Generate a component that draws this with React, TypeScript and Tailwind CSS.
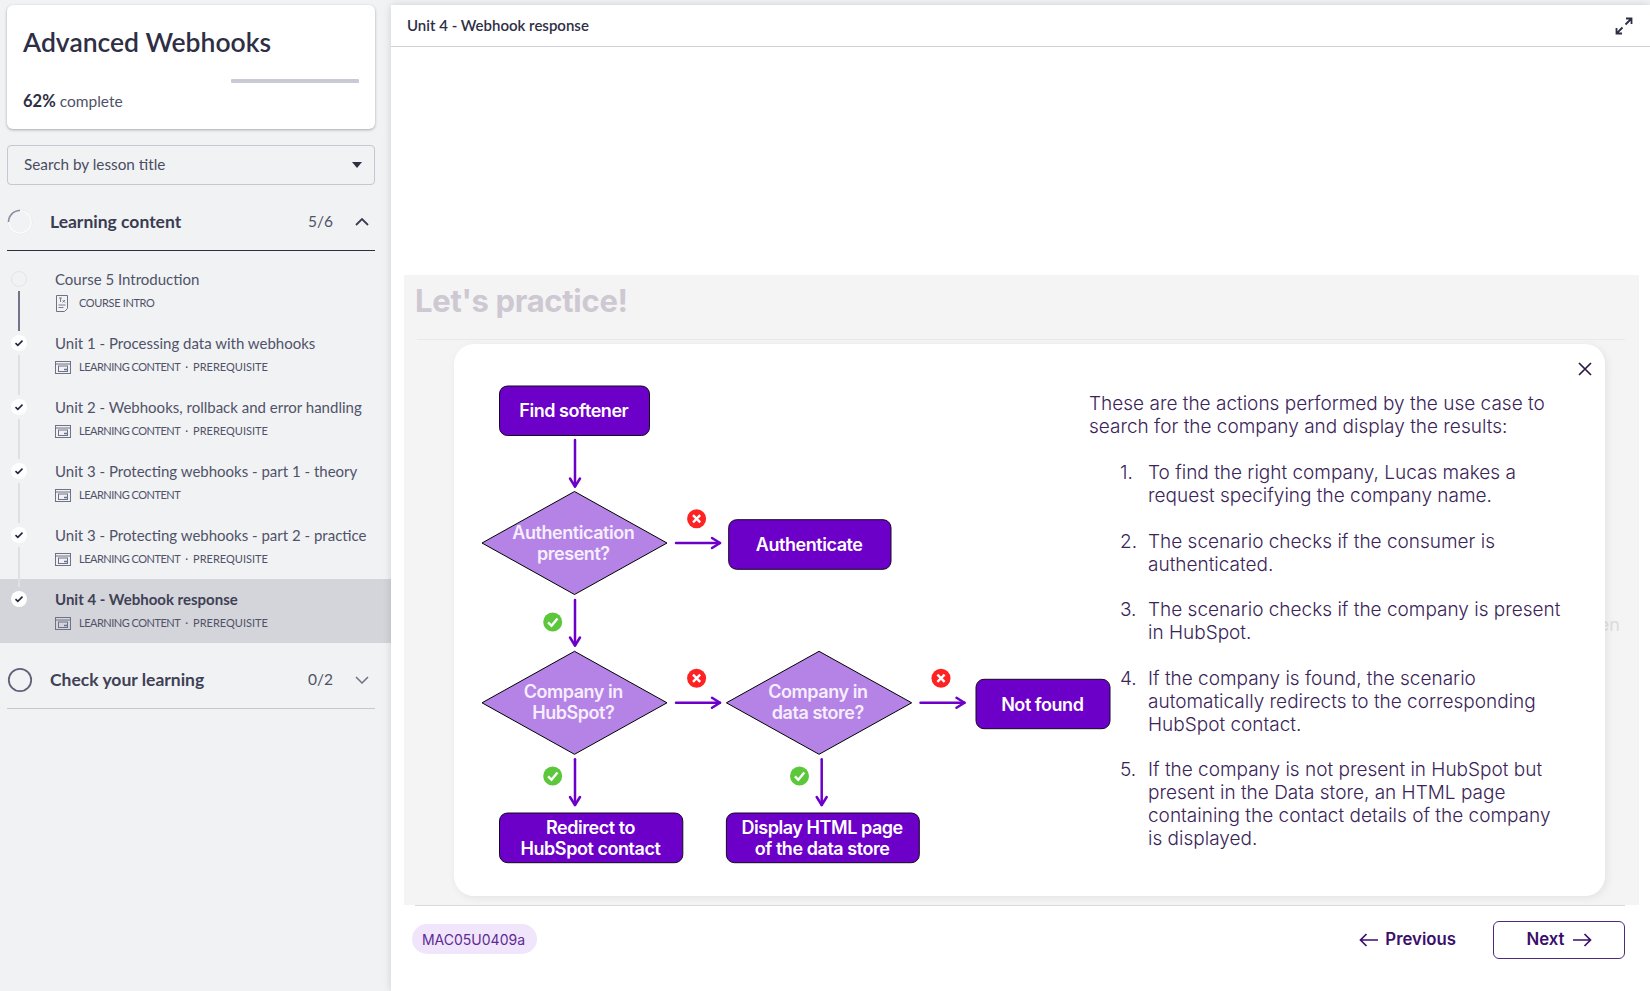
import React from "react";

const ST = "font-['Lato','Noto_Sans',sans-serif]";

const rows = [
  { title: "Course 5 Introduction", sub: ["COURSE INTRO"], intro: true, done: false, active: false },
  { title: "Unit 1 - Processing data with webhooks", sub: ["LEARNING CONTENT", "PREREQUISITE"], done: true, active: false },
  { title: "Unit 2 - Webhooks, rollback and error handling", sub: ["LEARNING CONTENT", "PREREQUISITE"], done: true, active: false },
  { title: "Unit 3 - Protecting webhooks - part 1 - theory", sub: ["LEARNING CONTENT"], done: true, active: false },
  { title: "Unit 3 - Protecting webhooks - part 2 - practice", sub: ["LEARNING CONTENT", "PREREQUISITE"], done: true, active: false },
  { title: "Unit 4 - Webhook response", sub: ["LEARNING CONTENT", "PREREQUISITE"], done: true, active: true },
];

const steps = [
  ["To find the right company, Lucas makes a", "request specifying the company name."],
  ["The scenario checks if the consumer is", "authenticated."],
  ["The scenario checks if the company is present", "in HubSpot."],
  ["If the company is found, the scenario", "automatically redirects to the corresponding", "HubSpot contact."],
  ["If the company is not present in HubSpot but", "present in the Data store, an HTML page", "containing the contact details of the company", "is displayed."],
];

function WindowIcon() {
  return (
    <svg width="16" height="13" viewBox="0 0 16 13" fill="none" stroke="#6f7186" strokeWidth="1" className="shrink-0">
      <rect x="0.5" y="0.5" width="15" height="12" />
      <path d="M0.5 3h15" />
      <rect x="3.5" y="5" width="9" height="5.5" />
      <path d="M9 8.5h3" strokeWidth="1.5" />
    </svg>
  );
}

function IntroIcon() {
  return (
    <svg width="14" height="17" viewBox="0 0 14 17" fill="none" stroke="#6f7186" strokeWidth="1" className="shrink-0">
      <path d="M1.5 0.5h11v13l-3 3h-8z" />
      <path d="M4 3h3M5.5 3v4M7.5 5l2.5 2.5M10 5l-2.5 2.5M3.5 10h7M3.5 12.5h5" strokeWidth="0.9" />
    </svg>
  );
}

function Row({ r, last }: { r: (typeof rows)[number]; last: boolean }) {
  return (
    <div className={`flex h-[64px] ${r.active ? "bg-[#d4d5da]" : ""}`}>
      <div className="w-[55px] shrink-0 flex flex-col items-center pr-[17px] pt-[12px]">
        <div
          className={`relative z-10 flex h-[16px] w-[16px] shrink-0 items-center justify-center rounded-full ${
            r.done ? "bg-white" : "border border-[#e4e5e9] bg-[#f1f2f4]"
          }`}
        >
          {r.done && (
            <svg width="10" height="8" viewBox="0 0 10 8" fill="none" stroke="#23233a" strokeWidth="1.6">
              <path d="M1.5 4.2l2.3 2.2L8.5 1.6" />
            </svg>
          )}
        </div>
        {!last && (
          <div
            className={`relative z-10 mt-[4px] h-[40px] w-[2px] shrink-0 ${
              r.intro ? "bg-[#71738a]" : "bg-[#dfe0e5]"
            }`}
          />
        )}
      </div>
      <div className="pt-[10px]">
        <div
          className={`text-[15px] leading-[20px] ${r.active ? "font-bold text-[#3f4156]" : "text-[#505268]"}`}
        >
          {r.title}
        </div>
        <div className="mt-[6px] flex h-[16px] items-center text-[11px] leading-[16px] text-[#505268]">
          {r.intro ? <IntroIcon /> : <WindowIcon />}
          <span className={r.intro ? "ml-[10px] tracking-[-0.35px]" : "ml-[8px] tracking-[-0.5px]"}>{r.sub[0]}</span>
          {r.sub[1] && <span className="mx-[5px]">·</span>}
          {r.sub[1] && <span>{r.sub[1]}</span>}
        </div>
      </div>
    </div>
  );
}

const PURPLE = "#6c00c9";

function DownArrow({ x, y1, y2 }: { x: number; y1: number; y2: number }) {
  return (
    <g stroke={PURPLE} strokeWidth="2.5" fill="none" strokeLinecap="round" strokeLinejoin="round">
      <path d={`M${x} ${y1}V${y2}`} />
      <path d={`M${x - 5} ${y2 - 8}L${x} ${y2}L${x + 5} ${y2 - 8}`} />
    </g>
  );
}

function RightArrow({ x1, x2, y }: { x1: number; x2: number; y: number }) {
  return (
    <g stroke={PURPLE} strokeWidth="2.5" fill="none" strokeLinecap="round" strokeLinejoin="round">
      <path d={`M${x1} ${y}H${x2}`} />
      <path d={`M${x2 - 8} ${y - 5}L${x2} ${y}L${x2 - 8} ${y + 5}`} />
    </g>
  );
}

function Cross({ x, y }: { x: number; y: number }) {
  return (
    <g>
      <circle cx={x} cy={y} r="9.5" fill="#ff2222" />
      <path d={`M${x - 3.6} ${y - 3.6}L${x + 3.6} ${y + 3.6}M${x + 3.6} ${y - 3.6}L${x - 3.6} ${y + 3.6}`} stroke="#fff" strokeWidth="2.4" />
    </g>
  );
}

function Tick({ x, y }: { x: number; y: number }) {
  return (
    <g>
      <circle cx={x} cy={y} r="9.5" fill="#5dc73c" />
      <path d={`M${x - 4.6} ${y + 0.4}L${x - 1.2} ${y + 3.8}L${x + 4.8} ${y - 3.6}`} stroke="#fff" strokeWidth="2.4" fill="none" />
    </g>
  );
}

function Box({ x, y, w, h, lines }: { x: number; y: number; w: number; h: number; lines: string[] }) {
  const cx = x + w / 2 - 0.7;
  const cy = y + h / 2;
  return (
    <g>
      <rect x={x} y={y} width={w} height={h} rx="8" fill={PURPLE} stroke="#14081f" strokeWidth="1" />
      {lines.map((l, i) => (
        <text key={l} x={cx} y={cy + 6.5 + (i - (lines.length - 1) / 2) * 21} textAnchor="middle" fill="#fff" fontSize="18" fontWeight="600" letterSpacing="-0.45">
          {l}
        </text>
      ))}
    </g>
  );
}

function Diamond({ l, r, t, b, lines }: { l: number; r: number; t: number; b: number; lines: string[] }) {
  const cx = (l + r) / 2;
  const cy = (t + b) / 2;
  return (
    <g>
      <polygon points={`${cx},${t} ${r},${cy} ${cx},${b} ${l},${cy}`} fill="#b483e5" stroke="#000" strokeWidth="1" />
      {lines.map((s, i) => (
        <text key={s} x={cx - 1.2} y={cy - 4.5 + i * 21} textAnchor="middle" fill="#f6eefe" fontSize="18" fontWeight="600" letterSpacing="-0.45">
          {s}
        </text>
      ))}
    </g>
  );
}

function Flowchart() {
  return (
    <svg
      viewBox="480 380 609 490"
      width="609"
      height="490"
      className="shrink-0 overflow-visible font-['Inter',sans-serif]"
    >
      <Box x={499.5} y={386} w={150} h={49.5} lines={["Find softener"]} />
      <DownArrow x={575} y1={440} y2={486.5} />
      <Diamond l={482} r={667} t={491.5} b={594.5} lines={["Authentication", "present?"]} />
      <Cross x={696.6} y={518.7} />
      <RightArrow x1={676} x2={720} y={543} />
      <Box x={728.7} y={519.7} w={162.3} h={49.6} lines={["Authenticate"]} />
      <Tick x={552.7} y={622} />
      <DownArrow x={575} y1={600} y2={645.5} />
      <Diamond l={482} r={667} t={651.3} b={754.3} lines={["Company in", "HubSpot?"]} />
      <Cross x={696.6} y={678.3} />
      <RightArrow x1={676} x2={720} y={702.8} />
      <Diamond l={726.4} r={911.7} t={651.3} b={754.3} lines={["Company in", "data store?"]} />
      <Cross x={941} y={678.3} />
      <RightArrow x1={920.5} x2={964.5} y={702.8} />
      <Box x={976} y={679.3} w={134} h={49.4} lines={["Not found"]} />
      <Tick x={552.7} y={776} />
      <DownArrow x={575} y1={759.3} y2={805} />
      <Tick x={799.5} y={776} />
      <DownArrow x={821.7} y1={759.3} y2={805} />
      <Box x={499.5} y={813} w={183.3} h={49.7} lines={["Redirect to", "HubSpot contact"]} />
      <Box x={726.4} y={813} w={192.9} h={49.7} lines={["Display HTML page", "of the data store"]} />
    </svg>
  );
}

export default function App() {
  return (
    <div className="flex h-[991px] w-[1650px] overflow-hidden bg-[#f1f2f4]">
      <aside className={`w-[391px] shrink-0 ${ST} text-[#2e2e45]`}>
        <div className="pr-[16px] pl-[7px] pt-[5px]">
          <div className="h-[124px] rounded-[6px] bg-white px-[16px] pt-[22px] shadow-[0_1px_3px_rgba(0,0,0,0.3)]">
            <h1 className="text-[26.5px] leading-[30px] font-semibold text-[#2e2e45]">Advanced Webhooks</h1>
            <div className="mt-[22px] ml-[208px] h-[4px] w-[128px] rounded-[1px] bg-[#c8cad6]" />
            <div className="mt-[8px] text-[15.5px] leading-[20px] text-[#505268]">
              <span className="text-[16.5px] font-bold text-[#2e2e45]">62%</span> complete
            </div>
          </div>
          <div className="mt-[16px] flex h-[40px] items-center justify-between rounded-[4px] border border-[#c5c7d3] pr-[12px] pb-[1px] pl-[16px] text-[15.3px] text-[#4a4c62]">
            <span>Search by lesson title</span>
            <span className="h-0 w-0 border-x-[5px] border-t-[6px] border-x-transparent border-t-[#2e2e45]" />
          </div>
          <div className="mt-[9px] flex h-[57px] items-center border-b border-[#2e2e45]">
            <svg width="26" height="26" viewBox="0 0 26 26" fill="none" className="shrink-0">
              <circle cx="13" cy="13" r="11.5" stroke="#ffffff" strokeWidth="1.6" />
              <circle cx="13" cy="13" r="12.2" stroke="#dcdde3" strokeWidth="0.5" />
              <path d="M1.5 13A11.5 11.5 0 0 1 13 1.5" stroke="#8a8ca0" strokeWidth="1.6" />
            </svg>
            <span className="ml-[17px] flex-1 text-[17.5px] font-bold text-[#3a3c52]">Learning content</span>
            <span className="text-[15.5px] text-[#505268]">5/6</span>
            <svg width="14" height="8" viewBox="0 0 14 8" fill="none" stroke="#3a3c52" strokeWidth="1.8" className="mr-[6px] ml-[22px]">
              <path d="M1 7l6-6 6 6" />
            </svg>
          </div>
        </div>
        <div className="mt-[8px]">
          {rows.map((r, i) => (
            <Row key={r.title} r={r} last={i === rows.length - 1} />
          ))}
        </div>
        <div className="pr-[16px] pl-[7px]">
          <div className="mt-[9px] flex h-[57px] items-center border-b border-[#c5c7d3]">
            <svg width="26" height="26" viewBox="0 0 26 26" fill="none" className="shrink-0">
              <circle cx="13" cy="13" r="11.2" stroke="#5f6178" strokeWidth="1.8" />
            </svg>
            <span className="ml-[17px] flex-1 text-[17.5px] font-bold text-[#3f4156]">Check your learning</span>
            <span className="text-[15.5px] text-[#505268]">0/2</span>
            <svg width="14" height="8" viewBox="0 0 14 8" fill="none" stroke="#6f7186" strokeWidth="1.5" className="mr-[6px] ml-[22px]">
              <path d="M1 1l6 6 6-6" />
            </svg>
          </div>
        </div>
      </aside>

      <main className="relative mt-[5px] flex flex-1 flex-col bg-white shadow-[0_0_8px_rgba(0,0,0,0.14)]">
        <header className={`flex h-[42px] shrink-0 items-center justify-between border-b border-[#cfd0d6] pr-[17px] pl-[16px] ${ST}`}>
          <span className="text-[15px] font-semibold text-[#2e2e45]">Unit 4 - Webhook response</span>
          <svg width="18" height="18" viewBox="0 0 18 18" fill="none" stroke="#2e2e45" strokeWidth="1.8">
            <path d="M10.5 7.5L16.5 1.5M11 1.5h5.5V7M7.5 10.5L1.5 16.5M1.5 11v5.5H7" />
          </svg>
        </header>

        <div className="h-[228px] shrink-0" />

        <section className="relative mr-[11px] ml-[13px] flex h-[630px] shrink-0 flex-col bg-[#f4f4f4]">
          <div className="mr-[14px] ml-[13px] h-[65px] shrink-0 border-b border-[#e9e9ec] font-['Inter',sans-serif]">
            <h2 className="-ml-[2px] pt-[6px] text-[31px] leading-[40px] font-bold tracking-[-0.3px] text-[#cdc8d2]">Let's practice!</h2>
          </div>
          <span className="absolute top-[337px] right-[19px] font-['Inter',sans-serif] text-[18px] leading-[26px] text-[#dcdce0]">en</span>
          <div className="relative mt-[4px] mr-[34px] mb-[9px] ml-[50px] flex flex-1 rounded-[20px] bg-white shadow-[2px_2px_8px_rgba(0,0,0,0.07)]">
            <button className="absolute top-[17px] right-[12px] text-[#2c1a45]">
              <svg width="16" height="16" viewBox="0 0 16 16" fill="none" stroke="currentColor" strokeWidth="1.7">
                <path d="M2 2l12 12M14 2L2 14" />
              </svg>
            </button>
            <div className="mt-[36px] ml-[26px] shrink-0">
              <Flowchart />
            </div>
            <div className="pt-[48px] font-['Inter',sans-serif] text-[19px] leading-[23px] font-light text-[#3a2458]">
              <p className="mb-[23px]">
                These are the actions performed by the use case to
                <br />
                search for the company and display the results:
              </p>
              <ol className="ml-[31px]">
                {steps.map((lines, i) => (
                  <li key={i} className="mb-[22.5px] flex">
                    <span className="w-[28px] shrink-0">{i + 1}.</span>
                    <span>
                      {lines.map((l, j) => (
                        <React.Fragment key={l}>
                          {j > 0 && <br />}
                          {l}
                        </React.Fragment>
                      ))}
                    </span>
                  </li>
                ))}
              </ol>
            </div>
          </div>
        </section>

        <footer className="mr-[25px] ml-[24px] flex shrink-0 items-start justify-between border-t border-[#d9d9dc] pt-[18px] font-['Inter',sans-serif]">
          <span className="-ml-[3px] flex h-[30px] w-[125px] items-center justify-center rounded-full bg-[#f0e5fa] pr-[2px] text-[14px] text-[#5e2a96]">
            MAC05U0409a
          </span>
          <div className="-mt-[3px] flex items-center">
            <button className="flex items-center gap-[6px] pb-[1px] text-[16.8px] font-semibold text-[#3c0e6b]">
              <svg width="20" height="14" viewBox="0 0 20 14" fill="none" stroke="currentColor" strokeWidth="1.7">
                <path d="M19 7H1.5M7.5 1L1.5 7l6 6" />
              </svg>
              Previous
            </button>
            <button className="ml-[37px] flex h-[38px] w-[132px] items-center justify-center gap-[7px] rounded-[6px] border-[1.5px] border-[#4e2a7f] pb-[1px] text-[16.8px] font-semibold text-[#3c0e6b]">
              Next
              <svg width="20" height="14" viewBox="0 0 20 14" fill="none" stroke="currentColor" strokeWidth="1.7">
                <path d="M1 7h17.5M12.5 1l6 6-6 6" />
              </svg>
            </button>
          </div>
        </footer>
      </main>
    </div>
  );
}
